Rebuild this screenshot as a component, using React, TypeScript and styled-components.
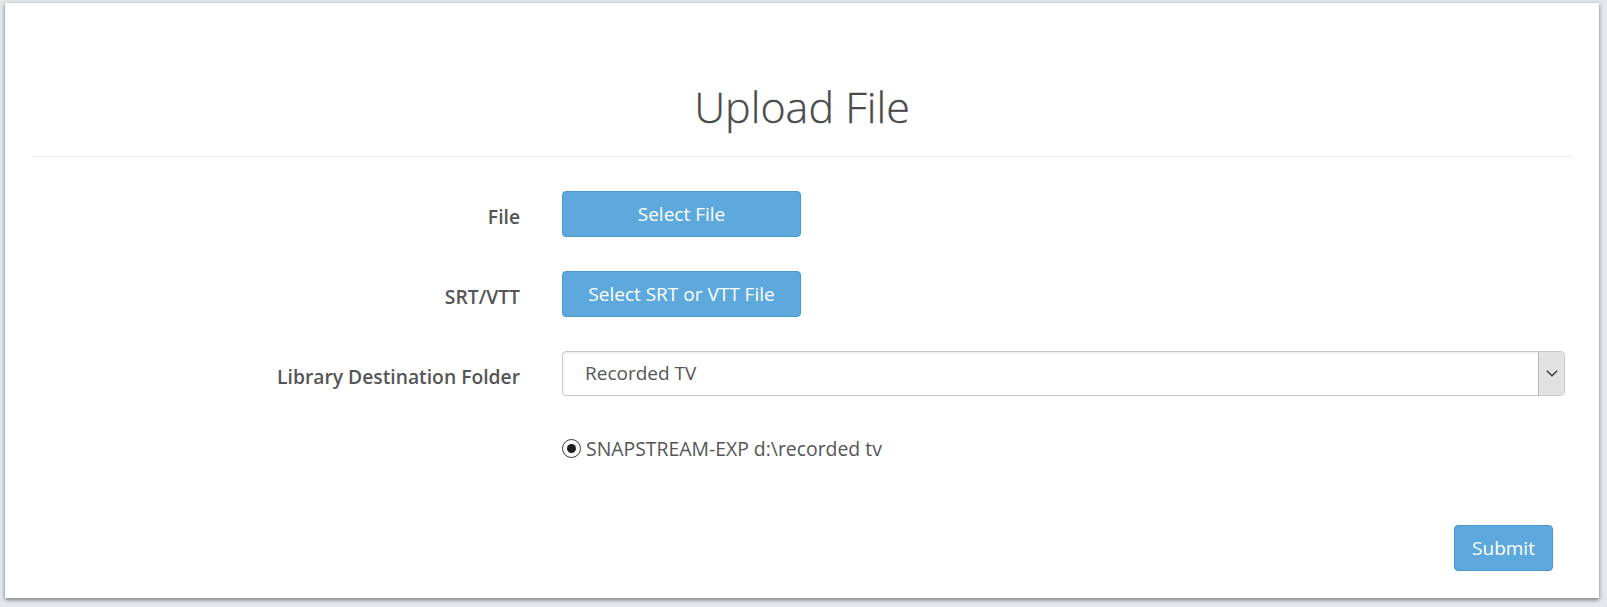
import React from 'react';
import styled, { createGlobalStyle } from 'styled-components';

const GlobalStyle = createGlobalStyle`
  html, body {
    margin: 0;
    padding: 0;
    background: #e4e8eb;
    font-family: 'Open Sans', 'Noto Sans', sans-serif;
    color: #555;
  }
  * {
    box-sizing: border-box;
  }
`;

const Page = styled.div`
  padding: 3px 8px 9px 5px;
  min-height: 607px;
`;

const Panel = styled.div`
  background: #fff;
  padding: 0 27px 27px;
  box-shadow: 0 2px 4px rgba(0, 0, 0, 0.42), 0 0 5px rgba(0, 0, 0, 0.1);
`;

const Header = styled.div`
  padding: 79px 0 24px;
  border-bottom: 1px solid #ebebeb;
  text-align: center;
`;

const Title = styled.h1`
  margin: 0;
  font-size: 43px;
  line-height: 49.5px;
  font-weight: 300;
  color: #4a4a4a;
  -webkit-text-stroke: 0.3px #4a4a4a;
`;

const Form = styled.form`
  padding-top: 34px;
`;

const Row = styled.div<{ $gap: number }>`
  display: grid;
  grid-template-columns: 488px 1fr;
  column-gap: 42px;
  padding-right: 7px;
  margin-bottom: ${(p) => p.$gap}px;
`;

const Label = styled.label`
  text-align: right;
  font-size: 19.3px;
  font-weight: 600;
  line-height: 27px;
  padding-top: 12px;
  color: #555;
`;

const Control = styled.div`
  display: flex;
  align-items: center;
`;

const BlueButton = styled.button<{ $width: number }>`
  width: ${(p) => p.$width}px;
  height: 46px;
  background: #5da9dd;
  border: 1px solid #4a97cd;
  border-radius: 4px;
  color: #fff;
  font-family: 'Open Sans', sans-serif;
  font-size: 19px;
  padding: 0;
  cursor: pointer;
`;

const Select = styled.div`
  flex: 1;
  display: flex;
  height: 45px;
  border: 1px solid #c8c8c8;
  border-radius: 4px;
  box-shadow: inset 0 1px 2px rgba(0, 0, 0, 0.1);
  overflow: hidden;
`;

const SelectValue = styled.div`
  flex: 1;
  display: flex;
  align-items: center;
  padding-left: 22px;
  font-size: 19px;
  color: #555;
`;

const SelectArrow = styled.div`
  width: 26px;
  display: flex;
  align-items: center;
  justify-content: center;
  background: #e2e2e2;
  border-left: 1px solid #b5b5b5;
`;

const RadioLine = styled.div`
  display: flex;
  align-items: center;
  gap: 5px;
  font-size: 19.4px;
  line-height: 27px;
  color: #555;
`;

const RadioDot = styled.span`
  width: 19px;
  height: 19px;
  border-radius: 50%;
  border: 1.5px solid #3a3a3a;
  display: flex;
  align-items: center;
  justify-content: center;
  background: #fff;

  &::after {
    content: '';
    width: 9px;
    height: 9px;
    border-radius: 50%;
    background: #1e1e1e;
  }
`;

const Footer = styled.div`
  display: flex;
  justify-content: flex-end;
  padding-right: 19px;
  margin-top: 63px;
`;

export default function App() {
  return (
    <Page>
      <GlobalStyle />
      <Panel>
        <Header>
          <Title>Upload File</Title>
        </Header>
        <Form onSubmit={(e) => e.preventDefault()}>
          <Row $gap={34}>
            <Label>File</Label>
            <Control>
              <BlueButton type="button" $width={239}>Select File</BlueButton>
            </Control>
          </Row>
          <Row $gap={34}>
            <Label>SRT/VTT</Label>
            <Control>
              <BlueButton type="button" $width={239}>Select SRT or VTT File</BlueButton>
            </Control>
          </Row>
          <Row $gap={39}>
            <Label>Library Destination Folder</Label>
            <Control>
              <Select>
                <SelectValue>Recorded TV</SelectValue>
                <SelectArrow>
                  <svg width="12" height="7" viewBox="0 0 12 7">
                    <path d="M0.8 0.8 L6 5.8 L11.2 0.8" fill="none" stroke="#333" strokeWidth="1.2" />
                  </svg>
                </SelectArrow>
              </Select>
            </Control>
          </Row>
          <Row $gap={0}>
            <div />
            <RadioLine>
              <RadioDot />
              SNAPSTREAM-EXP d:\recorded tv
            </RadioLine>
          </Row>
          <Footer>
            <BlueButton type="submit" $width={99}>Submit</BlueButton>
          </Footer>
        </Form>
      </Panel>
    </Page>
  );
}
